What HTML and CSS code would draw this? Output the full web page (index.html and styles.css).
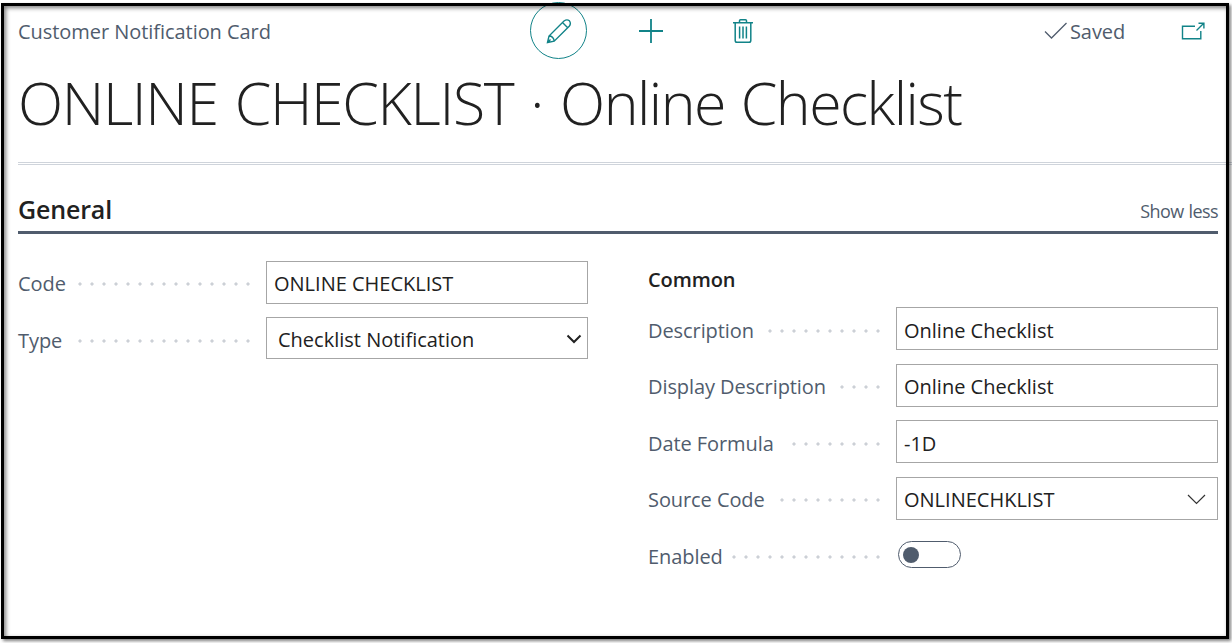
FILE: index.html
```html
<!DOCTYPE html>
<html lang="en">
<head>
<meta charset="utf-8">
<title>Customer Notification Card</title>
<link rel="stylesheet" href="styles.css">
</head>
<body>
<main class="page">
  <header class="topbar">
    <span class="caption">Customer Notification Card</span>
    <div class="actions">
      <button class="action action-edit" aria-label="Edit">
        <svg width="26" height="26" viewBox="0 0 26 26" fill="none" stroke="#118388" stroke-width="1.4"><path d="M1.500 24.500 3 18 18 3Q21 .8 23.400 2.800 25.400 5.500 23.200 8.200L8.200 23.200ZM3 18Q7.500 18 8.200 23.200M16.500 4.500 21.700 9.700M1.500 24.500 4.500 21.500"/></svg>
      </button>
      <button class="action" aria-label="New">
        <svg width="26" height="26" viewBox="0 0 26 26" fill="none" stroke="#118388" stroke-width="1.8"><path d="M13 1V25M1 13H25"/></svg>
      </button>
      <button class="action" aria-label="Delete">
        <svg width="22" height="26" viewBox="0 0 22 26" fill="none" stroke="#118388" stroke-width="1.5"><path d="M1 4.700H21M7.500 4.500V2.700Q7.500 1.700 8.500 1.700H13.500Q14.500 1.700 14.500 2.700V4.500M3.200 5V22.500Q3.200 24.300 5 24.300H17Q18.800 24.300 18.800 22.500V5M7.600 8.500V20.500M11 8.500V20.500M14.400 8.500V20.500"/></svg>
      </button>
    </div>
    <div class="status">
      <svg width="24" height="18" viewBox="0 0 24 18" fill="none" stroke="#505c6d" stroke-width="1.300"><path d="M1 9.500 7.500 16 22.500 1"/></svg>
      <span class="saved">Saved</span>
    </div>
    <svg class="popout" width="24" height="18" viewBox="0 0 24 18" fill="none" stroke="#118388" stroke-width="1.400"><path d="M14 4.200H1.500V16.800H19.800V9M15.500 8.500 22.500 1.500M17.500 1.300H22.900V6.500"/></svg>
  </header>
  <h1 class="title">ONLINE CHECKLIST · <span class="title-name">Online Checklist</span></h1>
  <div class="divider"></div>
  <section class="general">
    <div class="section-head">
      <h2 class="section-title">General</h2>
      <span class="show-less">Show less</span>
    </div>
    <div class="columns">
      <div class="column">
        <div class="row row-first">
          <span class="label">Code</span><span class="dots n15"></span>
          <div class="field">ONLINE CHECKLIST</div>
        </div>
        <div class="row row-shifted">
          <span class="label">Type</span><span class="dots n15"></span>
          <div class="field select"><span>Checklist Notification</span>
            <svg width="16" height="10" viewBox="0 0 16 10" fill="none" stroke="#212121" stroke-width="2"><path d="M1.500 1.500 8 8 14.500 1.500"/></svg>
          </div>
        </div>
      </div>
      <div class="column">
        <h3 class="group-title">Common</h3>
        <div class="row row-shifted">
          <span class="label">Description</span><span class="dots n10"></span>
          <div class="field">Online Checklist</div>
        </div>
        <div class="row">
          <span class="label">Display Description</span><span class="dots n4"></span>
          <div class="field">Online Checklist</div>
        </div>
        <div class="row row-shifted">
          <span class="label">Date Formula</span><span class="dots n8"></span>
          <div class="field">-1D</div>
        </div>
        <div class="row">
          <span class="label">Source Code</span><span class="dots n9"></span>
          <div class="field lookup"><span>ONLINECHKLIST</span>
            <svg width="19" height="11" viewBox="0 0 19 11" fill="none" stroke="#333" stroke-width="1.200"><path d="M1 1 9.500 9.500 18 1"/></svg>
          </div>
        </div>
        <div class="row row-shifted">
          <span class="label">Enabled</span><span class="dots n13"></span>
          <div class="toggle-cell"><span class="toggle"><span class="knob"></span></span></div>
        </div>
      </div>
    </div>
  </section>
</main>
<div class="frame"></div>
</body>
</html>
```
FILE: styles.css
```css
* { box-sizing: border-box; }
body {
  margin: 0;
  width: 1232px;
  height: 643px;
  overflow: hidden;
  background: #fff;
  color: #212121;
  font-family: "Open Sans", "Noto Sans", sans-serif;
  font-size: 20px;
}
svg { display: block; flex: none; }
h1, h2, h3 { margin: 0; }
.page { padding: 2px 0 0 18px; }
.frame {
  position: absolute;
  left: 1px;
  top: 3px;
  width: 1228px;
  height: 636px;
  border: 3px solid #000;
  box-shadow: 2px 2px 3px rgba(0,0,0,.5), inset 2px 2px 4px rgba(0,0,0,.5);
  pointer-events: none;
}
.topbar {
  display: grid;
  grid-template-columns: 511px 515px 137px 24px;
  align-items: center;
  height: 58px;
  color: #505c6d;
}
.caption { letter-spacing: -.05px; white-space: nowrap; }
.actions { display: flex; align-items: center; gap: 35px; padding: 0 0 1px 1px; }
.action {
  display: flex;
  align-items: center;
  justify-content: center;
  width: 57px;
  height: 57px;
  padding: 0;
  border: 0;
  background: none;
}
.action-edit { border: 1px solid #118388; border-radius: 50%; }
.status { display: flex; align-items: center; gap: 2px; }
.saved { letter-spacing: -.1px; }
.title {
  height: 102px;
  padding-top: 2px;
  font-size: 59px;
  line-height: 80px;
  font-weight: 300;
  letter-spacing: -1.35px;
  word-spacing: 3px;
  white-space: nowrap;
}
.title-name { letter-spacing: -1.5px; word-spacing: 2px; }
.divider { height: 3px; border: 1px solid #cfd4db; border-width: 1px 0; }
.general { width: 1200px; }
.section-head {
  display: flex;
  justify-content: space-between;
  height: 69px;
  padding-top: 27px;
  border-bottom: 3px solid #505c6d;
}
.section-title { font-size: 25px; line-height: 34px; font-weight: 600; letter-spacing: -.15px; }
.show-less { padding-top: 5px; font-size: 18px; line-height: 28px; letter-spacing: -.6px; word-spacing: 1px; color: #505c6d; }
.columns { display: grid; grid-template-columns: 570px 570px; gap: 60px; padding-top: 27px; }
.row { display: flex; align-items: flex-start; height: 43px; margin-bottom: 13.5px; }
.row-first { margin-bottom: 13px; }
.label { flex: none; line-height: 45px; letter-spacing: -.08px; white-space: nowrap; color: #505c6d; }
.row-shifted .label { line-height: 47px; }
.dots {
  flex: none;
  height: 46px;
  margin: 0 12px 0 auto;
  background: radial-gradient(circle at center, #ccd0d6 1.2px, transparent 2px) 0 0 / 12px 46px repeat-x;
}
.row-shifted .dots { height: 48px; background-size: 12px 48px; }
.n4 { width: 48px; }
.n8 { width: 96px; }
.n9 { width: 108px; }
.n10 { width: 120px; }
.n13 { width: 156px; }
.n15 { width: 180px; }
.field {
  display: flex;
  flex: none;
  align-items: center;
  justify-content: space-between;
  width: 322px;
  height: 43px;
  padding: 2px 7px 0;
  border: 1px solid #a6a6a6;
  letter-spacing: 0;
  white-space: nowrap;
}
.row-shifted .field { padding-top: 3px; }
.row-shifted .select { height: 42px; padding: 2px 5px 0 11px; }
.lookup { padding-right: 11px; }
.group-title { height: 46px; font-size: 20px; line-height: 38px; font-weight: 600; letter-spacing: -.1px; }
.toggle-cell { flex: none; width: 322px; padding: 8px 0 0 2px; }
.toggle {
  display: flex;
  align-items: center;
  width: 63px;
  height: 27px;
  padding-left: 4px;
  border: 1px solid #505c6d;
  border-radius: 14px;
}
.knob { width: 16px; height: 16px; border-radius: 50%; background: #505c6d; }
```
